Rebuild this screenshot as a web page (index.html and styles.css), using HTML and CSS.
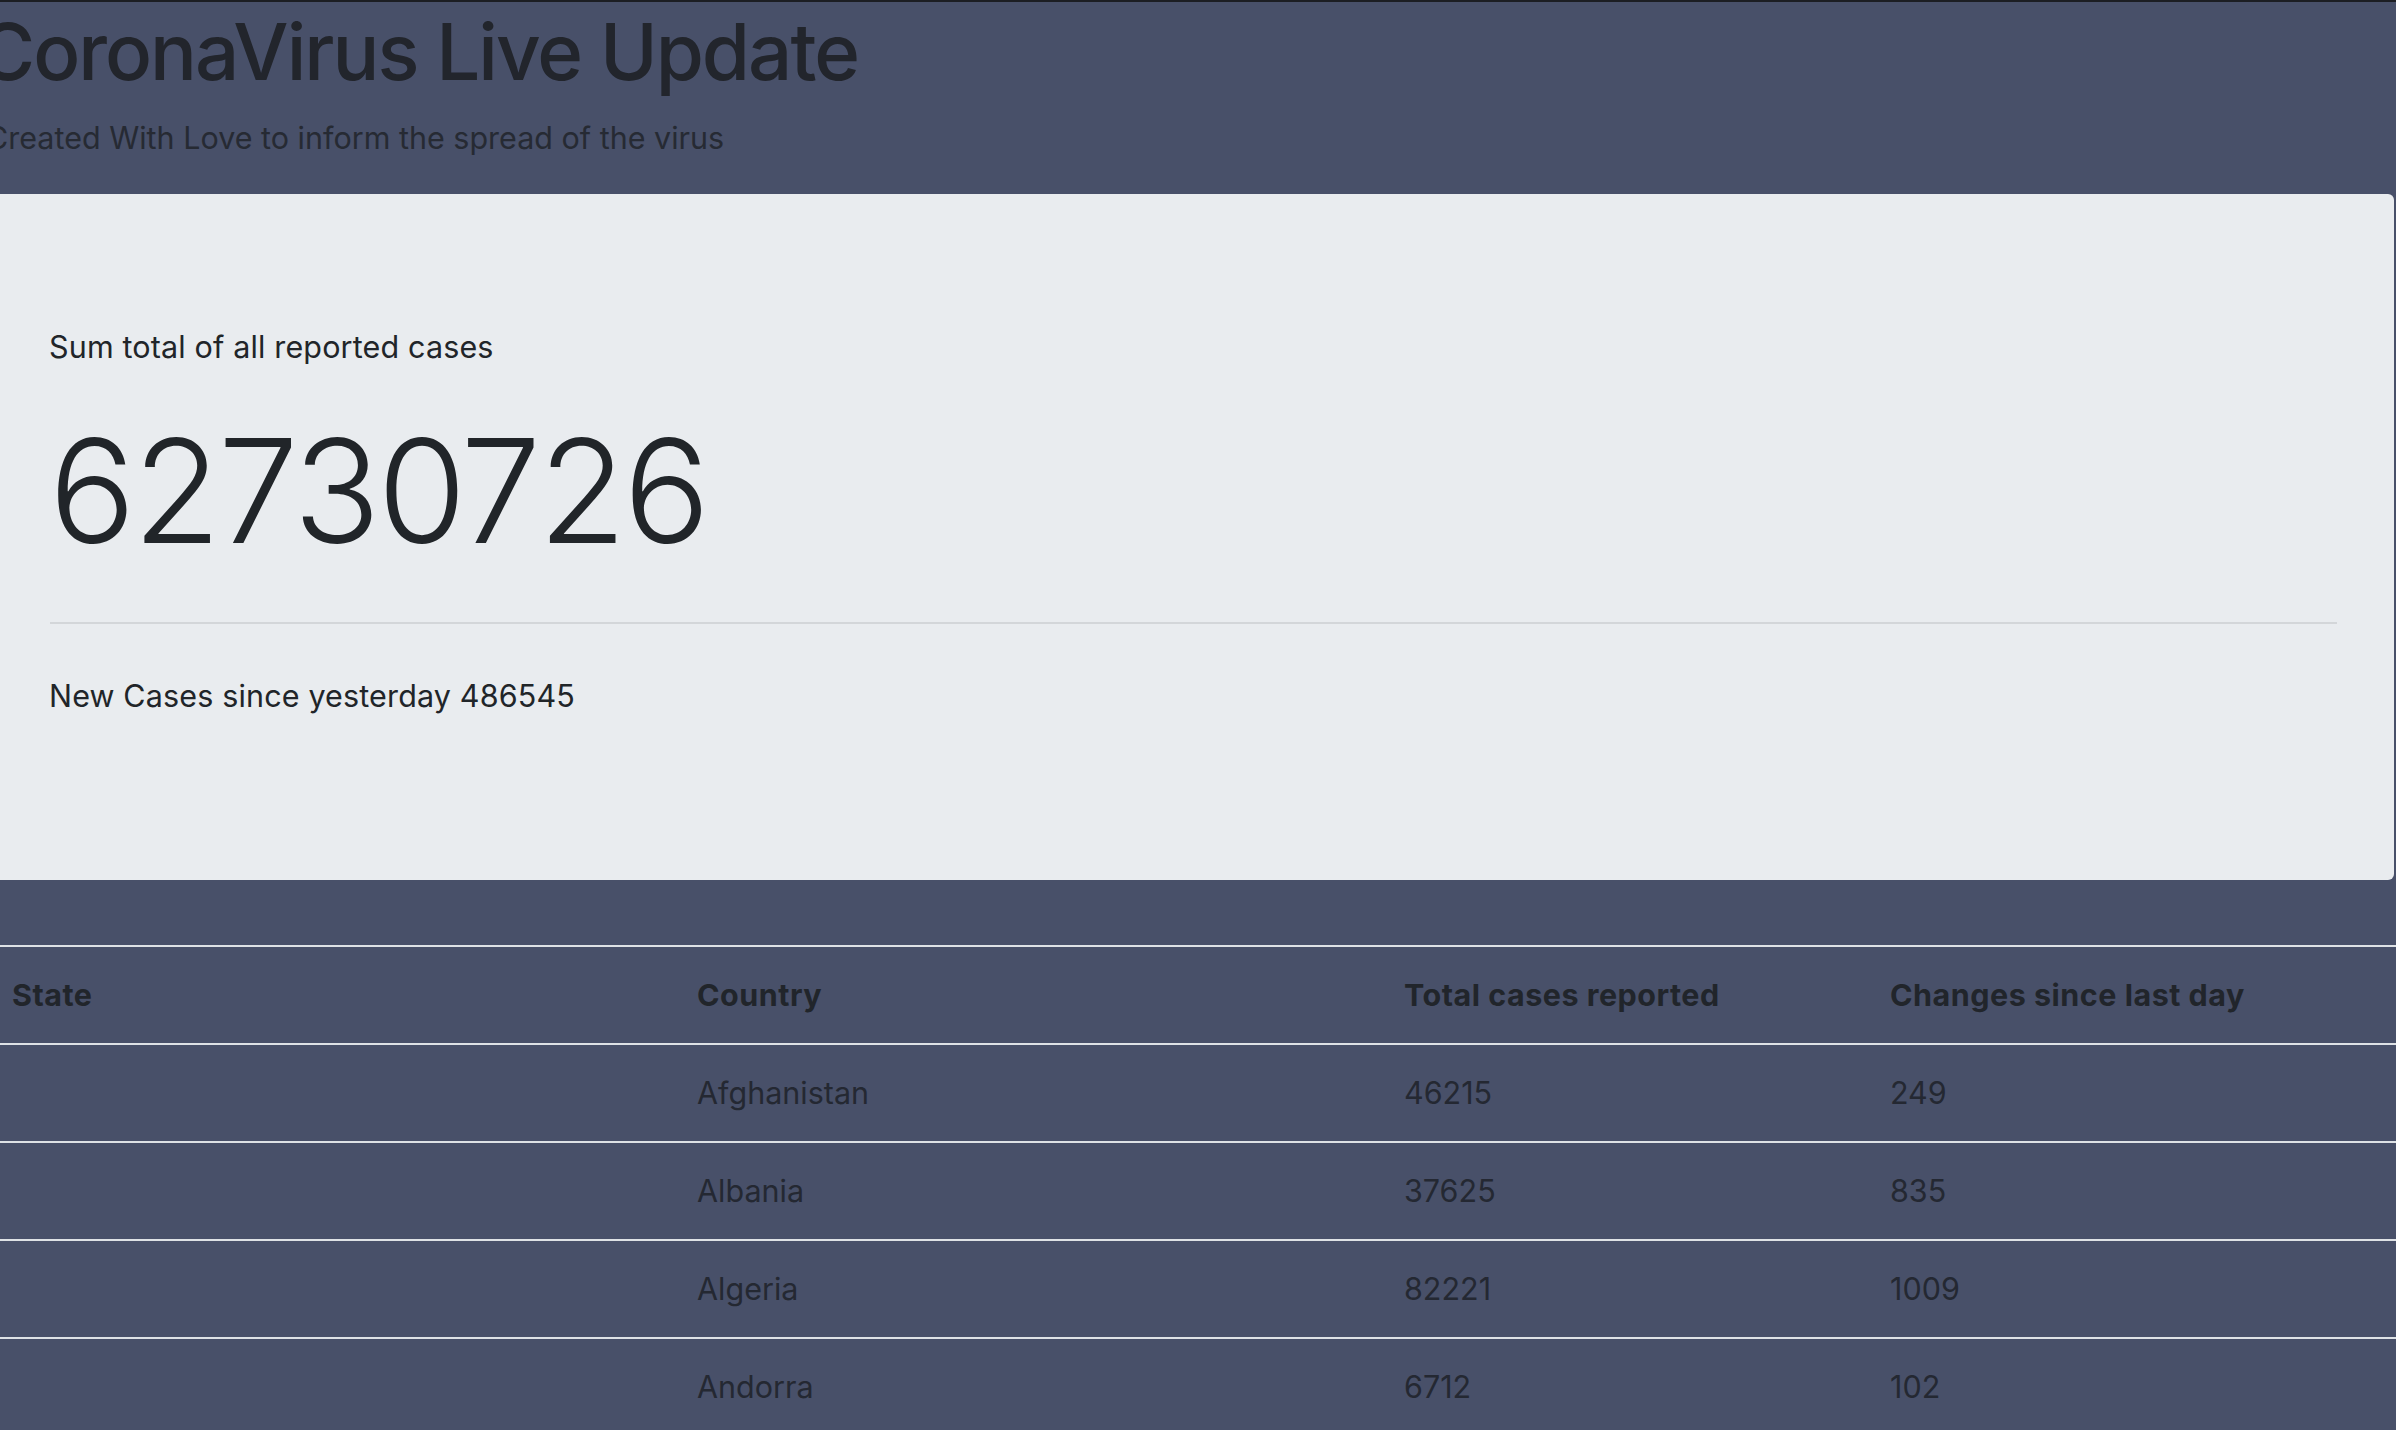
FILE: index.html
```html
<!DOCTYPE html>
<html lang="en">
<head>
<meta charset="utf-8">
<title>CoronaVirus Live Update</title>
<link rel="stylesheet" href="styles.css">
</head>
<body>
<header class="site-header">
  <h1 class="site-title">CoronaVirus Live Update</h1>
  <p class="site-subtitle">Created With Love to inform the spread of the virus</p>
</header>

<section class="jumbotron">
  <p class="lead">Sum total of all reported cases</p>
  <h2 class="total-number">62730726</h2>
  <hr class="divider">
  <p class="lead">New Cases since yesterday 486545</p>
</section>

<table class="cases-table">
  <colgroup>
    <col class="col-state">
    <col class="col-country">
    <col class="col-total">
    <col class="col-change">
  </colgroup>
  <thead>
    <tr><th>State</th><th>Country</th><th>Total cases reported</th><th>Changes since last day</th></tr>
  </thead>
  <tbody>
    <tr><td></td><td>Afghanistan</td><td>46215</td><td>249</td></tr>
    <tr><td></td><td>Albania</td><td>37625</td><td>835</td></tr>
    <tr><td></td><td>Algeria</td><td>82221</td><td>1009</td></tr>
    <tr><td></td><td>Andorra</td><td>6712</td><td>102</td></tr>
    <tr><td></td><td>Angola</td><td>15319</td><td>185</td></tr>
    <tr><td></td><td>Antigua and Barbuda</td><td>139</td><td>0</td></tr>
  </tbody>
</table>
</body>
</html>
```

FILE: styles.css
```css
* { box-sizing: border-box; }

html, body {
  margin: 0;
  padding: 0;
}

body {
  background: #485069;
  color: #212529;
  font-family: Inter, "Noto Sans", "Liberation Sans", sans-serif;
  overflow-x: hidden;
}

.site-header {
  border-top: 2px solid #1c1e23;
  padding: 3px 0 33px 0;
  background: #485069;
}

.site-title {
  margin: 0 0 16px -22px;
  font-size: 78px;
  line-height: 94px;
  font-weight: 500;
  letter-spacing: -2px;
  color: #22252c;
  white-space: nowrap;
}

.site-subtitle {
  margin: 0 0 0 -14px;
  font-size: 30.5px;
  line-height: 46px;
  font-weight: 400;
  color: #262a33;
  white-space: nowrap;
}

.jumbotron {
  background: #e9ecef;
  margin-right: 2px;
  border-radius: 0 6px 6px 0;
  padding: 130px 57px 161px 49px;
}

.lead {
  margin: 0 0 34px 0;
  font-size: 30.5px;
  line-height: 46px;
  font-weight: 400;
  letter-spacing: 0.15px;
}

.jumbotron .lead:last-child { margin-bottom: 0; }

.total-number {
  margin: 0 0 45px 0;
  font-size: 144px;
  line-height: 173px;
  font-weight: 300;
  letter-spacing: -3px;
}

.divider {
  margin: 0 0 49px 1px;
  border: 0;
  border-top: 2px solid #d3d6d9;
  height: 0;
}

.cases-table {
  width: 100%;
  margin-top: 65px;
  border-collapse: separate;
  border-spacing: 0;
  table-layout: fixed;
  font-size: 30.5px;
  line-height: 46px;
  color: #242832;
}

.col-state { width: 685px; }
.col-country { width: 707px; }
.col-total { width: 486px; }
.col-change { width: auto; }

.cases-table th,
.cases-table td {
  border-top: 2px solid #dee2e6;
  padding: 25px 12px;
  text-align: left;
  vertical-align: top;
  white-space: nowrap;
}

.cases-table th {
  font-weight: 700;
  letter-spacing: 0.5px;
  color: #21252b;
}
```
